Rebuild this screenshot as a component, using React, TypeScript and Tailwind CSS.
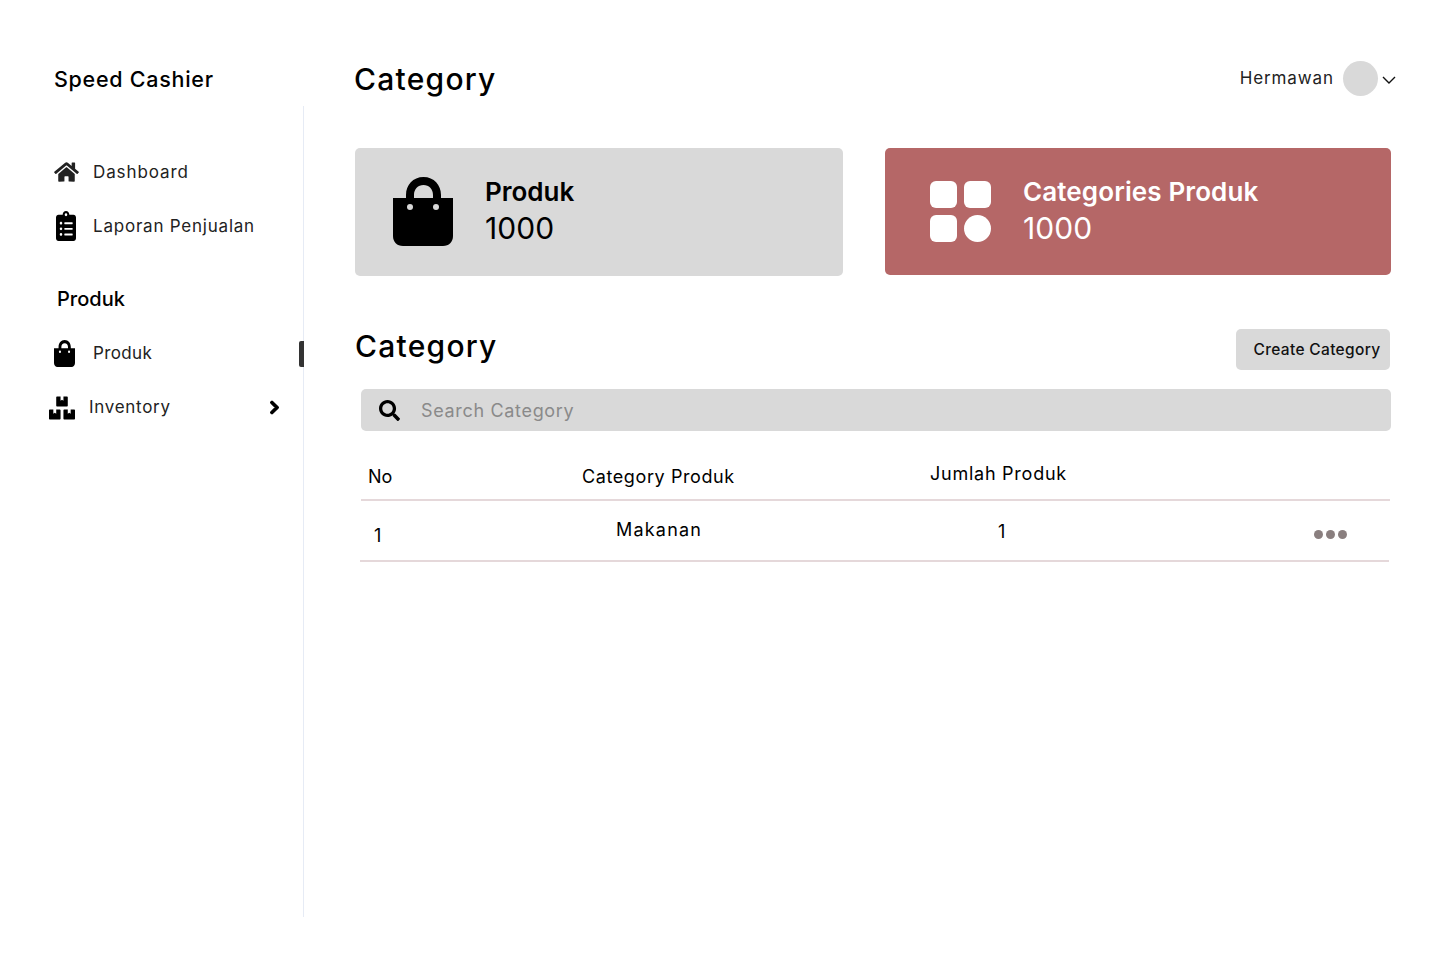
import React from "react";
import { FaHome, FaClipboardList, FaBoxes, FaChevronRight, FaSearch } from "react-icons/fa";

function BagIcon({ className, dot = "#d9d9d9" }: { className?: string; dot?: string }) {
  return (
    <svg viewBox="0 0 60 69" preserveAspectRatio="none" className={className} fill="currentColor">
      <path
        fillRule="evenodd"
        d="M13 21V18C13 8 20 0 30.5 0S48 8 48 18v3h12v38c0 6-4 10-10 10H10C4 69 0 65 0 59V21h13zm8 0h19v-3c0-6-4-10-9.500-10S21 12 21 18v3z"
      />
      <circle cx="17" cy="30" r="3" fill={dot} />
      <circle cx="43" cy="30" r="3" fill={dot} />
    </svg>
  );
}

function NavItem({ icon, label, textClass }: { icon: React.ReactNode; label: string; textClass: string }) {
  return (
    <div className="flex items-center h-[54px]">
      {icon}
      <span className={`text-[#222] text-[17px] ${textClass}`}>{label}</span>
    </div>
  );
}

export default function App() {
  return (
    <div className="flex w-[1440px] h-[960px] bg-white text-black font-['Inter',sans-serif] overflow-hidden">
      {/* Sidebar */}
      <aside className="w-[304px] shrink-0">
        <div className="h-[106px] pl-[54px] pt-[64px]">
          <h1 className="text-[21.5px] leading-[30px] font-medium tracking-[0.72px]">Speed Cashier</h1>
        </div>
        <nav className="h-[811px] border-r border-[#e6ebf5] pt-[40px] relative">
          <div className="pl-[54px]">
            <NavItem
              icon={<FaHome className="text-[#222] w-[25px] h-[22px] -mt-[2px]" />}
              label="Dashboard"
              textClass="ml-[14px] tracking-[0.9px]"
            />
            <NavItem
              icon={<FaClipboardList preserveAspectRatio="none" className="text-black w-[20px] h-[30px] ml-[2px] -mt-[2px]" />}
              label="Laporan Penjualan"
              textClass="ml-[17px] tracking-[0.78px]"
            />
          </div>
          <div className="pl-[57px] mt-[27px] h-[36px] flex items-center text-[20px] font-medium">Produk</div>
          <div className="pl-[54px] mt-[10px]">
            <NavItem
              icon={<BagIcon dot="#ffffff" className="text-black w-[21px] h-[27px] -mt-[2px]" />}
              label="Produk"
              textClass="ml-[18px] tracking-[0.35px]"
            />
          </div>
          <div className="pl-[49px] pr-[22px] flex items-center h-[54px]">
            <FaBoxes className="text-black w-[26px] h-[24px]" />
            <span className="ml-[14px] text-[#222] text-[17px] tracking-[0.7px]">Inventory</span>
            <FaChevronRight className="ml-auto w-[13px] h-[15px] -mt-[2px] [stroke-width:40px]" />
          </div>
          <span className="absolute -right-px top-[235px] w-[5px] h-[26px] bg-[#333] rounded-l-[2px]" />
        </nav>
      </aside>

      {/* Main */}
      <main className="flex-1 min-w-0 pl-[50px] pr-[49px]">
        <header className="h-[148px] pt-[58px] flex items-start">
          <h2 className="text-[30px] leading-[42px] font-medium tracking-[1.25px]">Category</h2>
          <div className="ml-auto mr-[-5px] flex items-center h-[40px]">
            <span className="text-[17px] tracking-[0.9px] text-[#222] mt-px">Hermawan</span>
            <span className="ml-[9px] w-[35px] h-[35px] rounded-full bg-[#d9d9d9]" />
            <svg viewBox="0 0 14 8" className="ml-[4px] mt-[3px] w-[14px] h-[8px]" fill="none" stroke="#111" strokeWidth="1.4">
              <path d="M1 1l6 6 6-6" />
            </svg>
          </div>
        </header>

        {/* Cards */}
        <section className="flex items-start gap-[42px] pl-px">
          <div className="w-[488px] h-[128px] bg-[#d9d9d9] rounded-[5px] flex items-center pl-[38px]">
            <BagIcon className="w-[60px] h-[69px] text-black -mt-[2px]" />
            <div className="ml-[32px] -mt-[5px]">
              <p className="text-[26px] leading-[36px] font-semibold">Produk</p>
              <p className="text-[30px] leading-[36px] tracking-[0.1px]">1000</p>
            </div>
          </div>
          <div className="w-[506px] h-[127px] bg-[#b56767] rounded-[5px] flex items-center pl-[45px] text-white">
            <div className="grid grid-cols-2 gap-[7px] w-[61px]">
              <span className="h-[27px] rounded-[6px] bg-white" />
              <span className="h-[27px] rounded-[6px] bg-white" />
              <span className="h-[27px] rounded-[6px] bg-white" />
              <span className="h-[27px] rounded-full bg-white" />
            </div>
            <div className="ml-[32px] -mt-[3px]">
              <p className="text-[26px] leading-[36px] font-semibold tracking-[0.12px]">Categories Produk</p>
              <p className="text-[30px] leading-[36px] tracking-[0.1px]">1000</p>
            </div>
          </div>
        </section>

        {/* Table */}
        <section className="pl-px">
          <div className="flex items-start justify-between mt-[53px] h-[60px]">
            <h2 className="text-[30px] leading-[34px] font-medium tracking-[1.25px]">Category</h2>
            <button className="w-[154px] h-[41px] bg-[#d9d9d9] rounded-[5px] text-[15.5px] font-medium tracking-[0.33px] text-[#111] mr-px pl-[8px] pt-px">
              Create Category
            </button>
          </div>
          <div className="ml-[6px] h-[42px] bg-[#d9d9d9] rounded-[5px] flex items-center pl-[18px]">
            <FaSearch className="w-[21px] h-[21px]" />
            <span className="ml-[21px] text-[18px] text-[#8a8a8a] tracking-[0.67px]">Search Category</span>
          </div>
          <div className="ml-[6px] mr-px mt-[23px] h-[47px] border-b-2 border-[#e5d8da] grid grid-cols-[221px_348px_1fr] text-[18px]">
            <span className="pl-[7px] pt-[10px] leading-[26px]">No</span>
            <span className="pt-[10px] leading-[26px] tracking-[0.6px]">Category Produk</span>
            <span className="pt-[7px] leading-[26px] tracking-[0.75px]">Jumlah Produk</span>
          </div>
          <div className="ml-[5px] mr-[2px] h-[61px] border-b-2 border-[#e5d8da] grid grid-cols-[256px_382px_1fr] text-[18px]">
            <span className="pl-[14px] pt-[22px] leading-[26px]">1</span>
            <span className="pt-[16px] leading-[26px] tracking-[1.2px]">Makanan</span>
            <div className="flex items-start pt-[18px]">
              <span className="leading-[26px]">1</span>
              <div className="ml-auto mr-[42px] mt-[11px] flex gap-[3px]">
                <span className="w-[9px] h-[9px] rounded-full bg-[#8a7f7f]" />
                <span className="w-[9px] h-[9px] rounded-full bg-[#8a7f7f]" />
                <span className="w-[9px] h-[9px] rounded-full bg-[#8a7f7f]" />
              </div>
            </div>
          </div>
        </section>
      </main>
    </div>
  );
}
